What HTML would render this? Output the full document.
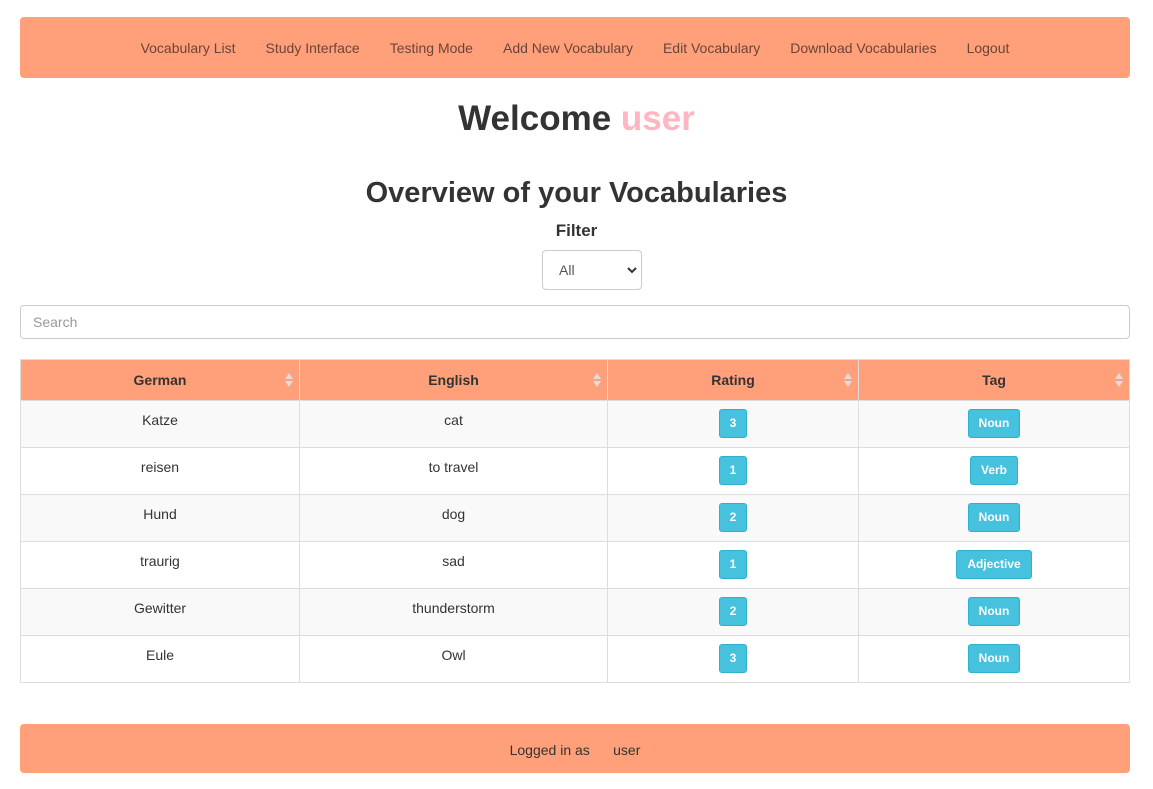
<!DOCTYPE html><html><head><style>
body{margin:0;font-family:"Liberation Sans",sans-serif;color:#333;background:#fff;width:1153px;height:789px;overflow:hidden;position:relative}
.nav{position:absolute;left:20px;top:17px;width:1110px;height:61px;background:#ffa07a;border-radius:4px;text-align:center;font-size:14px;line-height:62px;color:#6b4438}
.nav span{margin:0 15px}
.abs{position:absolute;left:0;width:1153px;text-align:center}
.sel{position:absolute;left:542px;top:250px;width:98px;height:38px;border:1px solid #ccc;border-radius:4px;font-size:14px;line-height:38px;color:#555}
.search{position:absolute;left:20px;top:305px;width:1108px;height:32px;border:1px solid #ccc;border-radius:4px;font-size:14px;line-height:32px;color:#999;box-sizing:content-box}
table{position:absolute;left:20px;top:359px;width:1110px;border-collapse:collapse;font-size:14px;border:1px solid #ddd}
td,th{border:1px solid #ddd;text-align:center;padding:0;position:relative}
th{background:#ffa07a;height:40px;font-weight:bold;color:#333}
td{height:47px;vertical-align:top;padding-top:11px;box-sizing:border-box}
tr:nth-child(even) td{background:#f9f9f9}
.b{display:inline-block;background:#46c1de;color:#fff;font-size:12px;font-weight:bold;border:1px solid #2fb0d0;border-radius:3px;height:27px;line-height:27px;padding:0 10px;margin-top:-3px}
.ar{position:absolute;right:4px;top:13px;width:0;height:0}
.ar:before{content:"";position:absolute;left:-10px;top:0;border:4px solid transparent;border-bottom:6px solid #ddd;border-top:0}
.ar:after{content:"";position:absolute;left:-10px;top:8px;border:4px solid transparent;border-top:6px solid #ddd;border-bottom:0}
.foot{position:absolute;left:20px;top:724px;width:1110px;height:49px;background:#ffa07a;border-radius:4px;text-align:center;line-height:52px;font-size:14px;color:#333}
</style></head><body>
<div class="nav"><span>Vocabulary List</span><span>Study Interface</span><span>Testing Mode</span><span>Add New Vocabulary</span><span>Edit Vocabulary</span><span>Download Vocabularies</span><span>Logout</span></div>
<div class="abs" style="top:99px;font-size:35px;font-weight:bold">Welcome <span style="color:#ffb6c1">user</span></div>
<div class="abs" style="top:177px;font-size:29px;font-weight:bold">Overview of your Vocabularies</div>
<div class="abs" style="top:221px;font-size:17px;font-weight:bold">Filter</div>
<div class="sel"><span style="position:absolute;left:16px">All</span><svg style="position:absolute;right:4px;top:15px" width="10" height="8"><path d="M1 2l4 4 4-4" stroke="#333" stroke-width="2" fill="none"/></svg></div>
<div class="search"><span style="margin-left:12px">Search</span></div>
<table>
<tr><th style="width:278px">German<i class="ar"></i></th><th style="width:307px">English<i class="ar"></i></th><th style="width:250px">Rating<i class="ar"></i></th><th>Tag<i class="ar"></i></th></tr>
<tr><td>Katze</td><td>cat</td><td><span class="b">3</span></td><td><span class="b">Noun</span></td></tr>
<tr><td>reisen</td><td>to travel</td><td><span class="b">1</span></td><td><span class="b">Verb</span></td></tr>
<tr><td>Hund</td><td>dog</td><td><span class="b">2</span></td><td><span class="b">Noun</span></td></tr>
<tr><td>traurig</td><td>sad</td><td><span class="b">1</span></td><td><span class="b">Adjective</span></td></tr>
<tr><td>Gewitter</td><td>thunderstorm</td><td><span class="b">2</span></td><td><span class="b">Noun</span></td></tr>
<tr><td>Eule</td><td>Owl</td><td><span class="b">3</span></td><td><span class="b">Noun</span></td></tr>
</table>
<div class="foot">Logged in as &nbsp;&nbsp;&nbsp;&nbsp; user</div>
</body></html>
